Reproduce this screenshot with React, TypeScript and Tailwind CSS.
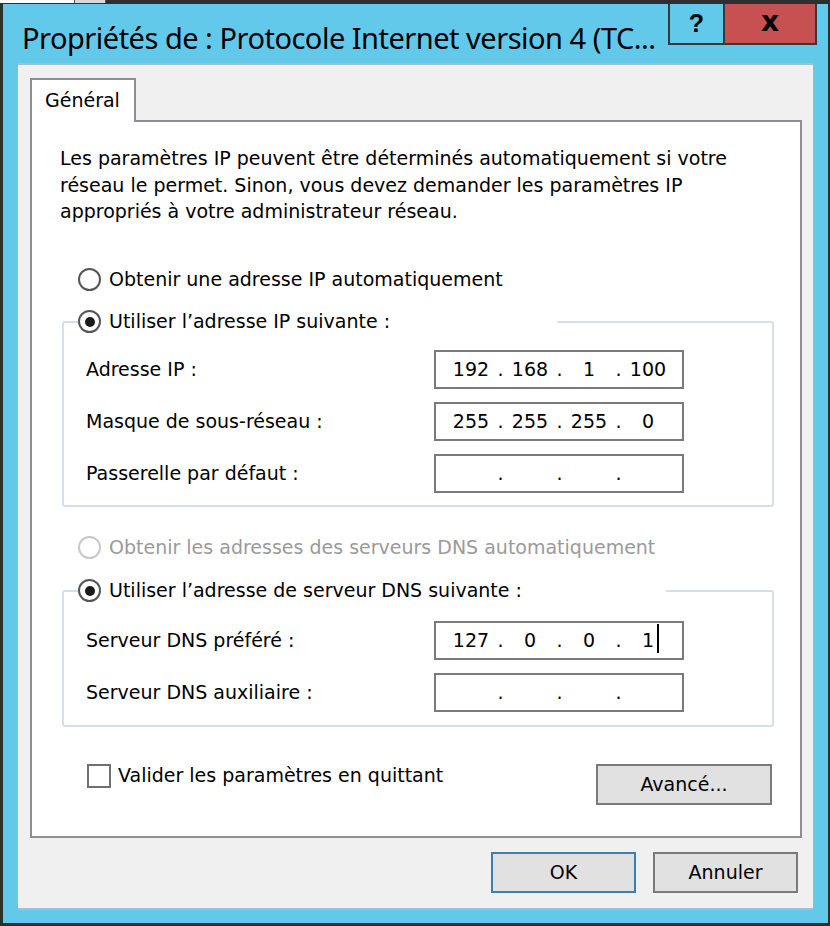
import React from 'react'

const ui = "font-['DejaVu_Sans',sans-serif] text-[19px] text-black"

function Radio({ checked, disabled }: { checked?: boolean; disabled?: boolean }) {
  return (
    <span
      className={`flex h-[23px] w-[23px] shrink-0 items-center justify-center rounded-full border-2 bg-white ${
        disabled ? 'border-[#c8c8c8]' : 'border-[#555555]'
      }`}
    >
      {checked && <span className="h-[10px] w-[10px] rounded-full bg-[#1a1a1a]" />}
    </span>
  )
}

function IpField({ parts, caret }: { parts: string[]; caret?: boolean }) {
  return (
    <div className="relative flex h-[39px] w-[250px] items-center border-2 border-[#7a7a7a] bg-white pl-[13px]">
      {parts.map((p, i) => (
        <React.Fragment key={i}>
          <span className="w-[44px] text-center">{p}</span>
          {i < 3 && <span className="w-[15px] text-center">.</span>}
        </React.Fragment>
      ))}
      {caret && <span className="absolute left-[221px] top-[1px] h-[29px] w-[2px] bg-black" />}
    </div>
  )
}

function FieldRow({ label, parts, caret }: { label: string; parts: string[]; caret?: boolean }) {
  return (
    <div className="flex h-[39px] items-center">
      <span className="ml-[8px] w-[348px]">{label}</span>
      <IpField parts={parts} caret={caret} />
    </div>
  )
}

export default function App() {
  return (
    <div className={`flex h-[926px] w-[830px] flex-col bg-[#2f2f2f] ${ui}`}>
      {/* strip of whatever sits behind the window */}
      <div className="flex h-[3px] shrink-0">
        <div className="w-[74px] bg-white" />
        <div className="w-[32px] border-x border-[#5a5a5a] bg-[#d9d9d9]" />
      </div>

      <div className="mb-[3px] ml-[3px] mr-[2px] mt-[1px] flex flex-1 flex-col bg-[#63c9ea]">
        {/* title bar */}
        <div className="flex h-[59px] shrink-0 items-start">
          <div className="mt-[14px] min-w-0 pl-[19px] font-['Noto_Sans',sans-serif] text-[29px] leading-[40px] tracking-[-0.5px] whitespace-nowrap">
            Propriétés de : Protocole Internet version 4 (TC...
          </div>
          <div className="ml-auto mr-[11px] flex h-[41px] shrink-0">
            <div className="flex w-[55px] items-center justify-center border-b-2 border-l-2 border-[#383838] bg-[#63c9ea] font-['Liberation_Sans',sans-serif] text-[25px] font-bold">
              ?
            </div>
            <div className="flex w-[94px] items-center justify-center border-x-2 border-b-2 border-[#383838] bg-[#c75050] pb-[4px] font-['DejaVu_Sans',sans-serif] text-[28px] font-bold">
              x
            </div>
          </div>
        </div>

        {/* client area */}
        <div className="mx-[15px] mb-[13px] flex flex-1 flex-col border-y-2 border-[#9fc0d2] bg-[#f0f0f0] px-[12px] pt-[13px]">
          <div className="relative z-10 -mb-[2px] flex h-[44px] w-[106px] items-center border-2 border-b-0 border-[#8c8e94] bg-white pb-[2px] pl-[13px]">
            Général
          </div>

          <div className="flex h-[718px] w-[772px] flex-col border-2 border-[#8c8e94] bg-white">
            <p className="ml-[28px] mt-[23px] whitespace-nowrap leading-[26.5px]">
              Les paramètres IP peuvent être déterminés automatiquement si votre
              <br />
              réseau le permet. Sinon, vous devez demander les paramètres IP
              <br />
              appropriés à votre administrateur réseau.
            </p>

            <div className="ml-[46px] mt-[40px] flex h-[30px] items-center gap-[8px]">
              <Radio />
              <span>Obtenir une adresse IP automatiquement</span>
            </div>

            <fieldset className="ml-[30px] mt-[12px] w-[712px] rounded-[3px] border-2 border-[#d5dfe5] pb-[12px] pl-[14px]">
              <legend className="p-0">
                <div className="flex h-[30px] w-[479px] items-center gap-[8px]">
                  <Radio checked />
                  <span>Utiliser l’adresse IP suivante :</span>
                </div>
              </legend>
              <div className="flex flex-col gap-[13px] pt-[13px]">
                <FieldRow label="Adresse IP :" parts={['192', '168', '1', '100']} />
                <FieldRow label="Masque de sous-réseau :" parts={['255', '255', '255', '0']} />
                <FieldRow label="Passerelle par défaut :" parts={['', '', '', '']} />
              </div>
            </fieldset>

            <div className="ml-[46px] mt-[26px] flex h-[30px] items-center gap-[8px] text-[#9a9a9a]">
              <Radio disabled />
              <span>Obtenir les adresses des serveurs DNS automatiquement</span>
            </div>

            <fieldset className="ml-[30px] mt-[13px] w-[712px] rounded-[3px] border-2 border-[#d5dfe5] pb-[13px] pl-[14px]">
              <legend className="p-0">
                <div className="flex h-[30px] w-[588px] items-center gap-[8px]">
                  <Radio checked />
                  <span>Utiliser l’adresse de serveur DNS suivante :</span>
                </div>
              </legend>
              <div className="flex flex-col gap-[13px] pt-[15px]">
                <FieldRow label="Serveur DNS préféré :" parts={['127', '0', '0', '1']} caret />
                <FieldRow label="Serveur DNS auxiliaire :" parts={['', '', '', '']} />
              </div>
            </fieldset>

            <div className="mt-[37px] flex items-start">
              <div className="ml-[55px] flex h-[24px] items-center gap-[7px]">
                <span className="h-[24px] w-[24px] border-2 border-[#707070] bg-white" />
                <span>Valider les paramètres en quittant</span>
              </div>
              <button className="ml-auto mr-[28px] h-[41px] w-[176px] border-2 border-[#7a7a7a] bg-[#e1e1e1]">
                Avancé...
              </button>
            </div>
          </div>

          <div className="mt-[14px] flex justify-end gap-[17px] pr-[3px]">
            <button className="h-[41px] w-[145px] border-2 border-[#3c7fb1] bg-[#e1e1e1]">OK</button>
            <button className="h-[41px] w-[145px] border-2 border-[#7a7a7a] bg-[#e1e1e1]">Annuler</button>
          </div>
        </div>
      </div>
    </div>
  )
}
